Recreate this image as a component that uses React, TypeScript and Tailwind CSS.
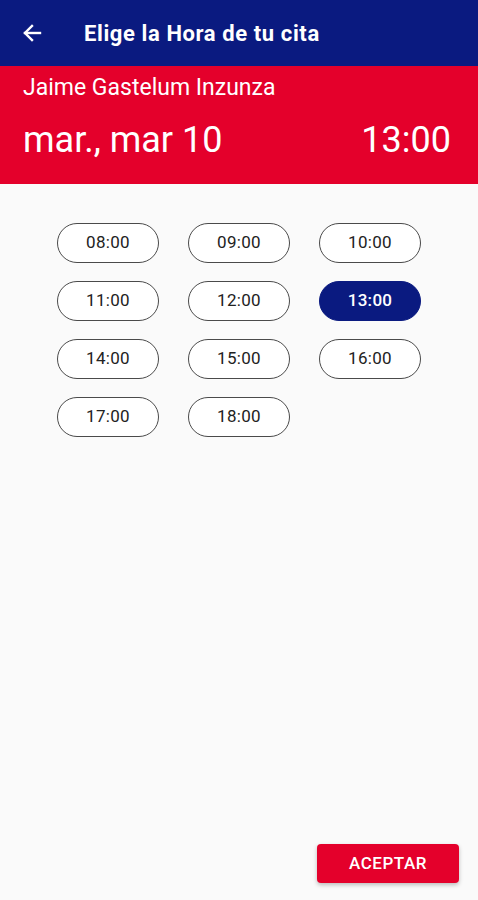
import React from 'react';

const hours = ['08:00', '09:00', '10:00', '11:00', '12:00', '13:00', '14:00', '15:00', '16:00', '17:00', '18:00'];

const TimeChip: React.FC<{ label: string; active?: boolean }> = ({ label, active }) => (
  <button
    className={`w-[102px] h-[40px] rounded-full text-[17px] tracking-[0.3px] flex items-center justify-center ${
      active ? 'bg-[#0a1a80] text-white border border-[#0a1a80] font-medium' : 'bg-white text-[#222] border border-[#4a4a4a]'
    }`}
  >
    {label}
  </button>
);

export default function App() {
  const selected = '13:00';
  return (
    <div className="w-[478px] h-[900px] bg-[#fafafa] flex flex-col font-['Roboto',sans-serif]">
      <div className="h-[66px] bg-[#0a1a80] flex items-center px-[22px] shrink-0">
        <svg width="20" height="18" viewBox="0 0 20 18" fill="none" stroke="white" strokeWidth="2.4" strokeLinecap="square">
          <path d="M18 9H3" />
          <path d="M10 2L3 9l7 7" />
        </svg>
        <h1 className="ml-[42px] text-white text-[22px] tracking-[0.6px] font-bold">Elige la Hora de tu cita</h1>
      </div>
      <div className="h-[118px] bg-[#e4002b] px-[23px] pt-[8px] text-white shrink-0">
        <div className="text-[23px] leading-[28px]">Jaime Gastelum Inzunza</div>
        <div className="flex justify-between items-center mt-[16px]">
          <span className="text-[36px] leading-[44px]">mar., mar 10</span>
          <span className="text-[36px] leading-[44px] mr-[4px]">13:00</span>
        </div>
      </div>
      <div className="flex-1 flex flex-col">
        <div className="grid grid-cols-[102px_102px_102px] gap-x-[29px] gap-y-[18px] pl-[57px] pt-[39px]">
          {hours.map((h) => (
            <TimeChip key={h} label={h} active={h === selected} />
          ))}
        </div>
        <div className="mt-auto flex justify-end pr-[19px] pb-[17px]">
          <button className="w-[142px] h-[39px] bg-[#e4002b] text-white text-[17px] tracking-[0.5px] font-medium rounded-[4px] shadow-[0_2px_4px_rgba(0,0,0,0.25)]">
            ACEPTAR
          </button>
        </div>
      </div>
    </div>
  );
}
